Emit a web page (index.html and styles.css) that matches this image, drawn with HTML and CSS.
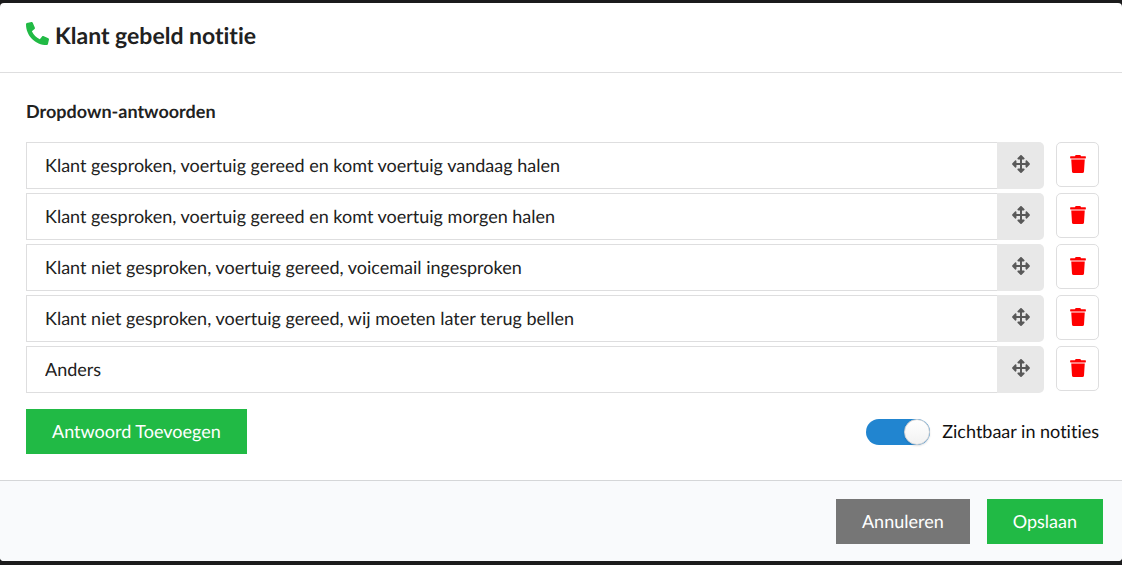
FILE: index.html
```html
<!DOCTYPE html>
<html lang="nl">
<head>
<meta charset="utf-8">
<title>Klant gebeld notitie</title>
<link rel="stylesheet" href="styles.css">
</head>
<body>
<svg class="sprite" aria-hidden="true">
  <symbol id="phone" viewBox="0 0 512 512"><path transform="matrix(-1 0 0 1 512 0)" d="M493.4 24.6l-104-24c-11.3-2.6-22.9 3.3-27.5 13.9l-48 112c-4.2 9.8-1.4 21.3 6.9 28l60.6 49.6c-36 76.7-98.9 140.5-177.2 177.2l-49.6-60.6c-6.8-8.3-18.2-11.1-28-6.9l-112 48C3.9 366.5-2 378.1.6 389.4l24 104C27.1 504.2 36.7 512 48 512c256.1 0 464-207.5 464-464 0-11.2-7.7-20.9-18.6-23.4z"/></symbol>
  <symbol id="move" viewBox="0 0 512 512"><path d="M352.201 425.775l-79.196 79.196c-9.373 9.373-24.568 9.373-33.941 0l-79.196-79.196c-15.119-15.119-4.411-40.971 16.971-40.97h51.162L228 284H127.196v51.162c0 21.382-25.851 32.09-40.971 16.971L7.029 272.937c-9.373-9.373-9.373-24.569 0-33.941L86.225 159.8c15.119-15.119 40.971-4.411 40.971 16.971V228H228V127.196h-51.23c-21.382 0-32.09-25.851-16.971-40.971l79.196-79.196c9.373-9.373 24.568-9.373 33.941 0l79.196 79.196c15.119 15.119 4.411 40.971-16.971 40.971h-51.162V228h100.804v-51.162c0-21.382 25.851-32.09 40.97-16.971l79.196 79.196c9.373 9.373 9.373 24.569 0 33.941L425.773 352.2c-15.119 15.119-40.971 4.411-40.97-16.971V284H284v100.804h51.23c21.382 0 32.09 25.851 16.971 40.971z"/></symbol>
  <symbol id="trash" viewBox="0 0 448 512"><path d="M432 32H312l-9.4-18.7A24 24 0 0 0 281.1 0H166.8a23.72 23.72 0 0 0-21.4 13.3L136 32H16A16 16 0 0 0 0 48v32a16 16 0 0 0 16 16h416a16 16 0 0 0 16-16V48a16 16 0 0 0-16-16zM53.2 467a48 48 0 0 0 47.9 45h245.8a48 48 0 0 0 47.9-45L416 128H32z"/></symbol>
</svg>
<main class="modal">
  <header class="modal-header">
    <svg class="phone-icon" aria-hidden="true"><use href="#phone"/></svg>
    <h1 class="title">Klant gebeld notitie</h1>
  </header>
  <form class="content">
    <h2 class="section-label" id="answers">Dropdown-antwoorden</h2>
    <ul class="answers" aria-labelledby="answers">
      <li class="answer">
        <div class="field"><input class="text" type="text" aria-label="Antwoord 1" value="Klant gesproken, voertuig gereed en komt voertuig vandaag halen"><button class="handle" type="button" aria-label="Verplaatsen"><svg class="move-icon"><use href="#move"/></svg></button></div>
        <button class="delete" type="button" aria-label="Verwijderen"><svg class="trash-icon"><use href="#trash"/></svg></button>
      </li>
      <li class="answer">
        <div class="field"><input class="text" type="text" aria-label="Antwoord 2" value="Klant gesproken, voertuig gereed en komt voertuig morgen halen"><button class="handle" type="button" aria-label="Verplaatsen"><svg class="move-icon"><use href="#move"/></svg></button></div>
        <button class="delete" type="button" aria-label="Verwijderen"><svg class="trash-icon"><use href="#trash"/></svg></button>
      </li>
      <li class="answer">
        <div class="field"><input class="text" type="text" aria-label="Antwoord 3" value="Klant niet gesproken, voertuig gereed, voicemail ingesproken"><button class="handle" type="button" aria-label="Verplaatsen"><svg class="move-icon"><use href="#move"/></svg></button></div>
        <button class="delete" type="button" aria-label="Verwijderen"><svg class="trash-icon"><use href="#trash"/></svg></button>
      </li>
      <li class="answer">
        <div class="field"><input class="text" type="text" aria-label="Antwoord 4" value="Klant niet gesproken, voertuig gereed, wij moeten later terug bellen"><button class="handle" type="button" aria-label="Verplaatsen"><svg class="move-icon"><use href="#move"/></svg></button></div>
        <button class="delete" type="button" aria-label="Verwijderen"><svg class="trash-icon"><use href="#trash"/></svg></button>
      </li>
      <li class="answer">
        <div class="field"><input class="text" type="text" aria-label="Antwoord 5" value="Anders"><button class="handle" type="button" aria-label="Verplaatsen"><svg class="move-icon"><use href="#move"/></svg></button></div>
        <button class="delete" type="button" aria-label="Verwijderen"><svg class="trash-icon"><use href="#trash"/></svg></button>
      </li>
    </ul>
    <div class="toolbar">
      <button class="button" type="button">Antwoord Toevoegen</button>
      <label class="toggle"><input class="switch" type="checkbox" role="switch" checked>Zichtbaar in notities</label>
    </div>
  </form>
  <footer class="actions">
    <button class="button button-grey" type="button">Annuleren</button>
    <button class="button" type="button">Opslaan</button>
  </footer>
</main>
</body>
</html>
```
FILE: styles.css
```css
*, *::before { box-sizing: border-box; }

body {
  margin: 0;
  padding: 3px 0 4px;
  background: #1b1b1c;
  color: #212121;
  font: 18px/24px Lato, "Liberation Sans", sans-serif;
  font-variant-ligatures: none;
  text-rendering: geometricPrecision;
}

.sprite { display: none; }
svg { display: block; fill: currentColor; }
button, input { margin: 0; font: inherit; font-variant-ligatures: none; text-rendering: inherit; color: inherit; }

.modal {
  overflow: hidden;
  border-radius: 4px;
  background: #fff;
}

.modal-header {
  display: flex;
  align-items: flex-start;
  gap: 6px;
  padding: 19px 26px 23px;
  border-bottom: 1px solid #dededf;
}

.phone-icon { width: 23px; height: 23px; color: #21ba45; }
.title { margin: 0; font-size: 23px; line-height: 27px; font-weight: 700; }

.content { padding: 26px 23px 26px 26px; }
.section-label { margin: 0 0 19px; font-size: 18px; line-height: 24px; font-weight: 700; }

.answers {
  display: grid;
  gap: 4px;
  margin: 0 0 16px;
  padding: 0;
  list-style: none;
}

.answer { display: flex; align-items: flex-start; gap: 12px; }
.field { display: flex; flex: 1; height: 47px; }

.text {
  flex: 1;
  min-width: 0;
  padding: 0 18px 1px;
  border: 1px solid #dededf;
  border-right: 0;
  border-radius: 0;
  background: #fff;
}

.handle {
  display: flex;
  justify-content: center;
  width: 47px;
  padding: 13px 0 0;
  border: 0;
  border-radius: 0 5px 5px 0;
  background: #e8e8e8;
  color: #595959;
}

.move-icon { width: 18px; height: 18px; }

.delete {
  display: flex;
  justify-content: center;
  width: 43px;
  height: 45px;
  padding: 12px 0 0;
  border: 1px solid #dededf;
  border-radius: 5px;
  background: #fff;
  color: #f00;
}

.trash-icon { width: 16px; height: 18px; }

.toolbar { display: flex; align-items: flex-start; justify-content: space-between; }

.button {
  height: 45px;
  padding: 0 26px 1px;
  border: 0;
  background: #21ba45;
  color: #fff;
}

.button-grey { background: #767676; }

.toggle {
  display: flex;
  align-items: flex-start;
  gap: 12px;
  padding-top: 10px;
  color: #111;
}

.switch {
  appearance: none;
  width: 64px;
  height: 26px;
  border-radius: 13px;
  background: #2185d0;
}

.switch::before {
  content: "";
  display: block;
  width: 26px;
  height: 26px;
  margin-left: auto;
  border: 1px solid #d4d4d5;
  border-radius: 50%;
  background: linear-gradient(#fff, #f2f2f2);
  box-shadow: 0 1px 2px #22242626;
}

.actions {
  display: flex;
  justify-content: flex-end;
  gap: 17px;
  padding: 18px 19px 17px;
  border-top: 1px solid #d5d6d8;
  background: #f9fafc;
}
```
